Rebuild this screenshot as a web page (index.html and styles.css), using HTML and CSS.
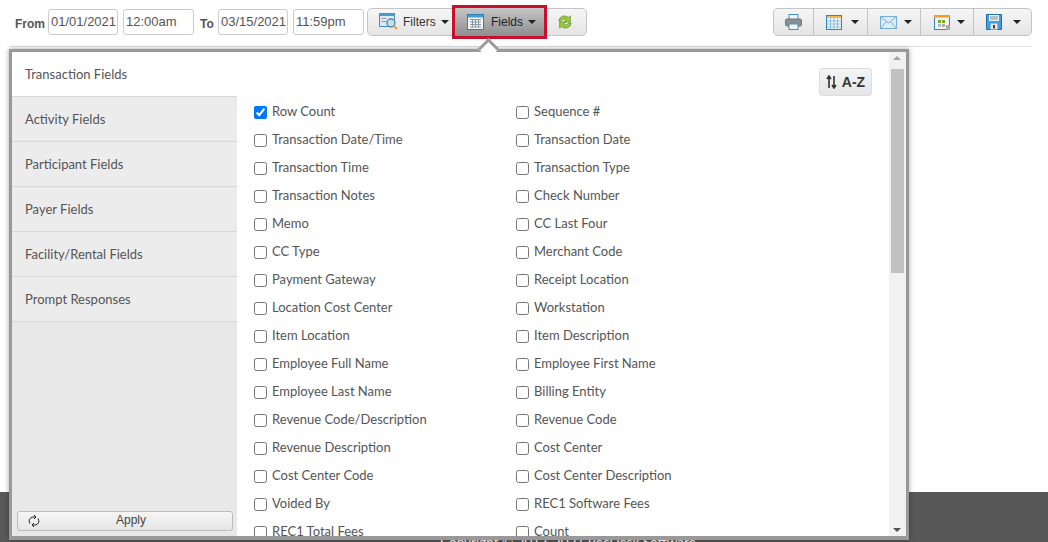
FILE: index.html
```html
<!DOCTYPE html>
<html lang="en">
<head>
<meta charset="utf-8">
<title>Fields</title>
<link rel="stylesheet" href="styles.css">
</head>
<body>
<div class="page">
  <header class="toolbar">
    <span class="lbl lbl-from">From</span>
    <input class="field" value="01/01/2021">
    <input class="field field-time" value="12:00am">
    <span class="lbl lbl-to">To</span>
    <input class="field" value="03/15/2021">
    <input class="field field-time" value="11:59pm">
    <div class="group group-left">
      <button class="tb tb-filters">
        <svg width="20" height="18" viewBox="0 0 20 18"><rect x="0.5" y="0.5" width="15" height="13" fill="#dbe9f5" stroke="#3f8fc6"/><rect x="0.5" y="0.5" width="15" height="2.5" fill="#4b9bd2"/><rect x="2.5" y="5" width="5" height="1" fill="#999"/><rect x="2.5" y="8" width="5" height="1" fill="#999"/><circle cx="12" cy="10" r="4" fill="#bfe0f2" stroke="#5b8aa8" stroke-width="1.4"/><path d="M15 13l3 3" stroke="#e8a33a" stroke-width="2"/></svg>
        <span>Filters</span><i class="caret"></i>
      </button>
      <button class="tb tb-fields">
        <svg width="17" height="16" viewBox="0 0 17 16"><rect x="0.5" y="0.5" width="16" height="15" fill="#f3f6fa" stroke="#2f7fb8"/><rect x="1" y="1" width="15" height="2.5" fill="#4a9ad4"/><path d="M3 5.500h11M3 8h11M3 10.500h11M3 13h11M5.500 5v8.500M8.500 5v8.500M11.500 5v8.500" stroke="#8a97a5" fill="none"/></svg>
        <span>Fields</span><i class="caret"></i>
      </button>
      <button class="tb tb-refresh">
        <svg width="16" height="16" viewBox="0 0 18 18"><path d="M2 8a6.500 6.500 0 0 1 11-4L15 2v7H8l2.500-2.500A3.500 3.500 0 0 0 5 8z" fill="#9ccc3c" stroke="#5a8f1f" stroke-width=".8"/><path d="M16 10a6.500 6.500 0 0 1-11 4L3 16V9h7l-2.500 2.500A3.500 3.500 0 0 0 13 10z" fill="#9ccc3c" stroke="#5a8f1f" stroke-width=".8"/></svg>
      </button>
    </div>
    <div class="group group-right">
      <button class="tb tb-print">
        <svg width="17" height="16" viewBox="0 0 17 16"><rect x="4" y="0.500" width="9" height="5" fill="#eef5fb" stroke="#4a8fc2"/><rect x="0.500" y="5" width="16" height="7" rx="1.500" fill="#8a8f94" stroke="#6f7478"/><rect x="4" y="10" width="9" height="5.500" fill="#f2f7fb" stroke="#4a8fc2"/></svg>
      </button>
      <button class="tb tb-menu">
        <svg width="16" height="15" viewBox="0 0 16 15"><rect x="0.500" y="0.500" width="15" height="14" fill="#eef6fc" stroke="#2f86c2"/><rect x="1" y="1" width="14" height="2" fill="#f2b84b"/><path d="M1 6h14M1 9h14M1 12h14M4.500 3v11M8 3v11M11.500 3v11" stroke="#8fc0e0" fill="none"/></svg>
        <i class="caret"></i>
      </button>
      <button class="tb tb-menu">
        <svg width="17" height="13" viewBox="0 0 17 13"><rect x="0.500" y="0.500" width="16" height="12" fill="#dcecf8" stroke="#77aed6"/><path d="M1 1l7.500 6L16 1M1 12l5.500-6.500M16 12l-5.500-6.500" stroke="#77aed6" fill="none"/></svg>
        <i class="caret"></i>
      </button>
      <button class="tb tb-menu tb-cal">
        <svg width="16" height="15" viewBox="0 0 16 15"><rect x="0.500" y="0.500" width="15" height="14" fill="#f6f6ee" stroke="#2f86c2"/><rect x="0" y="0" width="16" height="2.500" fill="#f29a2e"/><rect x="4" y="5" width="3" height="3" fill="#7aa82f"/><rect x="8" y="5" width="3" height="3" fill="#7aa82f"/><rect x="8" y="9" width="3" height="3" fill="#aaa"/><rect x="4" y="9" width="3" height="3" fill="#bbb"/><rect x="12" y="10" width="4" height="5" fill="#aaa"/></svg>
        <i class="caret"></i>
      </button>
      <button class="tb tb-menu tb-last">
        <svg width="16" height="16" viewBox="0 0 16 16"><path d="M0.500 0.500h15v15h-15z" fill="#3f9fdc" stroke="#1f70a8"/><rect x="3" y="1" width="10" height="6" fill="#f2f5f8"/><path d="M4 3h8M4 5h8" stroke="#7a8a98"/><rect x="4.500" y="9.500" width="7" height="6" fill="#e6e6e6"/><rect x="7" y="11" width="2" height="3.500" fill="#444"/></svg>
        <i class="caret"></i>
      </button>
    </div>
  </header>
  <div class="rule"></div>
  <div class="spacer"></div>
  <footer class="footer">Copyright © 2017-2021 RecDesk Software</footer>
</div>

<section class="popup">
  <div class="notch"></div>
  <aside class="side">
    <a class="side-item is-active">Transaction Fields</a>
    <a class="side-item">Activity Fields</a>
    <a class="side-item">Participant Fields</a>
    <a class="side-item">Payer Fields</a>
    <a class="side-item">Facility/Rental Fields</a>
    <a class="side-item">Prompt Responses</a>
    <button class="apply">
      <svg class="apply-ico" width="12" height="12" viewBox="0 0 12 12"><path d="M2 8.500a4 4 0 0 1 3-6.500h2M10 3.500a4 4 0 0 1-3 6.500H5M6 0L8 2 6 4M6 8L4 10l2 2" stroke="#222" stroke-width="1" fill="none"/></svg>
      <span>Apply</span>
    </button>
  </aside>
  <div class="content">
    <button class="az">
      <svg width="11" height="14" viewBox="0 0 11 14"><path d="M3 13V2M1 4l2-3 2 3" stroke="#333" stroke-width="1.600" fill="none"/><path d="M8 1v11M6 10l2 3 2-3" stroke="#333" stroke-width="1.600" fill="none"/></svg>
      <span>A-Z</span>
    </button>
    <div class="fields">
      <label class="row"><input type="checkbox" checked>Row Count</label>
      <label class="row"><input type="checkbox">Sequence #</label>
      <label class="row"><input type="checkbox">Transaction Date/Time</label>
      <label class="row"><input type="checkbox">Transaction Date</label>
      <label class="row"><input type="checkbox">Transaction Time</label>
      <label class="row"><input type="checkbox">Transaction Type</label>
      <label class="row"><input type="checkbox">Transaction Notes</label>
      <label class="row"><input type="checkbox">Check Number</label>
      <label class="row"><input type="checkbox">Memo</label>
      <label class="row"><input type="checkbox">CC Last Four</label>
      <label class="row"><input type="checkbox">CC Type</label>
      <label class="row"><input type="checkbox">Merchant Code</label>
      <label class="row"><input type="checkbox">Payment Gateway</label>
      <label class="row"><input type="checkbox">Receipt Location</label>
      <label class="row"><input type="checkbox">Location Cost Center</label>
      <label class="row"><input type="checkbox">Workstation</label>
      <label class="row"><input type="checkbox">Item Location</label>
      <label class="row"><input type="checkbox">Item Description</label>
      <label class="row"><input type="checkbox">Employee Full Name</label>
      <label class="row"><input type="checkbox">Employee First Name</label>
      <label class="row"><input type="checkbox">Employee Last Name</label>
      <label class="row"><input type="checkbox">Billing Entity</label>
      <label class="row"><input type="checkbox">Revenue Code/Description</label>
      <label class="row"><input type="checkbox">Revenue Code</label>
      <label class="row"><input type="checkbox">Revenue Description</label>
      <label class="row"><input type="checkbox">Cost Center</label>
      <label class="row"><input type="checkbox">Cost Center Code</label>
      <label class="row"><input type="checkbox">Cost Center Description</label>
      <label class="row"><input type="checkbox">Voided By</label>
      <label class="row"><input type="checkbox">REC1 Software Fees</label>
      <label class="row"><input type="checkbox">REC1 Total Fees</label>
      <label class="row"><input type="checkbox">Count</label>
    </div>
  </div>
  <div class="scroll">
    <i class="arrow-up"></i>
    <div class="thumb"></div>
    <i class="arrow-down"></i>
  </div>
</section>
</body>
</html>
```
FILE: styles.css
```css
* { box-sizing: border-box; }
html, body { margin: 0; height: 100%; overflow: hidden; background: #fff; }
body { font-family: Lato, "Liberation Sans", sans-serif; color: #555; position: relative; }

.page { height: 542px; display: flex; flex-direction: column; }

.toolbar { height: 46px; padding: 9px 16px 0 15px; display: flex; align-items: flex-start; flex: none; }
.lbl { font: bold 12px "Liberation Sans", Arial, sans-serif; color: #555; margin-top: 8px; }
.lbl-from { width: 33px; }
.lbl-to { width: 18px; margin-left: 6px; }
.field { width: 70px; height: 26px; border: 1px solid #ccc; border-radius: 3px; padding: 0 1px 2px 2px; margin-right: 5px; font: 13px "Liberation Sans", Arial, sans-serif; color: #555; background: #fff; outline: 0; }
.field-time { width: 71px; margin-right: 0; }

.group { display: flex; height: 28px; margin-top: -1px; border: 1px solid #c4c4c4; border-radius: 5px; background: linear-gradient(#f6f6f6, #e4e4e4); }
.group-left { margin-left: 3px; width: 220px; }
.group-right { margin-left: auto; width: 259px; height: 28px; }

.tb { border: 0; background: none; padding: 0; margin: 0; height: 100%; display: flex; align-items: center; font: 12px "Liberation Sans", Arial, sans-serif; color: #333; }
.tb-filters { width: 85px; padding-left: 11px; }
.tb-filters span { margin-left: 4px; }
.tb-filters .caret { margin-left: 5px; }
.tb-fields { width: 95px; height: 34px; margin-top: -4px; margin-left: -1px; padding-left: 12px; border: 3px solid #c8102e; background: linear-gradient(#c6c6c6, #8e8e8e); color: #222; }
.tb-fields span { margin-left: 7px; }
.tb-fields .caret { margin-left: 5px; }
.tb-refresh { flex: 1; justify-content: center; padding-right: 3px; }

.caret { display: block; width: 0; height: 0; border: 4px solid transparent; border-top: 4px solid #222; border-bottom: 0; }

.tb-print { width: 40px; justify-content: center; border-right: 1px solid #c4c4c4; }
.tb-menu { width: 54px; padding-left: 12px; border-right: 1px solid #c4c4c4; }
.tb-menu .caret { margin-left: auto; margin-right: 8px; }
.tb-cal { width: 53px; padding-left: 13px; }
.tb-last { border-right: 0; width: 57px; padding-left: 12px; }
.tb-last .caret { margin-right: 10px; }

.rule { height: 1px; background: #e2e2e2; margin: 0 16px 0 9px; flex: none; }
.spacer { flex: 1; }
.footer { flex: none; height: 50px; background: #585858; color: #fff; font-size: 13.5px; text-align: center; padding-top: 42px; padding-left: 88px; overflow: hidden; }

.popup { position: absolute; left: 9px; top: 49px; width: 900px; height: 491px; border: 3px solid #999; border-bottom-width: 4px; background: #fff; display: flex; box-shadow: 0 0 5px rgba(0,0,0,.35); }
.notch { position: absolute; left: 469px; top: -11px; width: 15px; height: 15px; background: #fff; border-left: 3px solid #999; border-top: 3px solid #999; transform: rotate(45deg); }

.side { width: 225px; flex: none; background: #e8e8e8; display: flex; flex-direction: column; position: relative; z-index: 1; }
.side-item { height: 45px; padding: 0 0 0 13px; display: flex; align-items: center; font-size: 13px; color: #555; border-bottom: 1px solid #d8d8d8; background: #ececec; }
.side-item.is-active { background: #fff; }
.apply { margin: auto 4px 5px 5px; height: 20px; border: 1px solid #bcbcbc; border-radius: 3px; background: linear-gradient(#f6f6f6, #e6e6e6); font: 12px "Liberation Sans", Arial, sans-serif; color: #444; position: relative; padding: 0 0 2px 12px; }
.apply-ico { position: absolute; left: 10px; top: 3px; }

.content { flex: 1; position: relative; overflow: hidden; z-index: 1; background: #fff; }
.az { position: absolute; top: 16px; left: 582px; width: 53px; height: 28px; border: 1px solid #ddd; border-radius: 3px; background: linear-gradient(#f4f4f4, #e6e6e6); display: flex; align-items: center; justify-content: center; gap: 5px; font: bold 14px "Liberation Sans", Arial, sans-serif; color: #333; padding: 0; }

.fields { display: grid; grid-template-columns: 262px 262px; grid-auto-rows: 28px; padding: 45px 0 0 18px; }
.row { display: flex; align-items: center; font-size: 13px; color: #555; white-space: nowrap; height: 28px; padding-bottom: 1px; }
.row input { margin: 4px 5px 0 -1px; width: 13px; height: 13px; flex: none; }

.scroll { width: 17px; flex: none; background: #f1f1f1; position: relative; z-index: 1; padding: 17px 2px 0; }
.thumb { height: 204px; background: #c1c1c1; }
.arrow-up, .arrow-down { position: absolute; left: 4px; width: 0; height: 0; border: 4px solid transparent; }
.arrow-up { top: 4px; border-top: 0; border-bottom: 4px solid #a3a3a3; }
.arrow-down { bottom: 4px; border-bottom: 0; border-top: 4px solid #505050; }
```
